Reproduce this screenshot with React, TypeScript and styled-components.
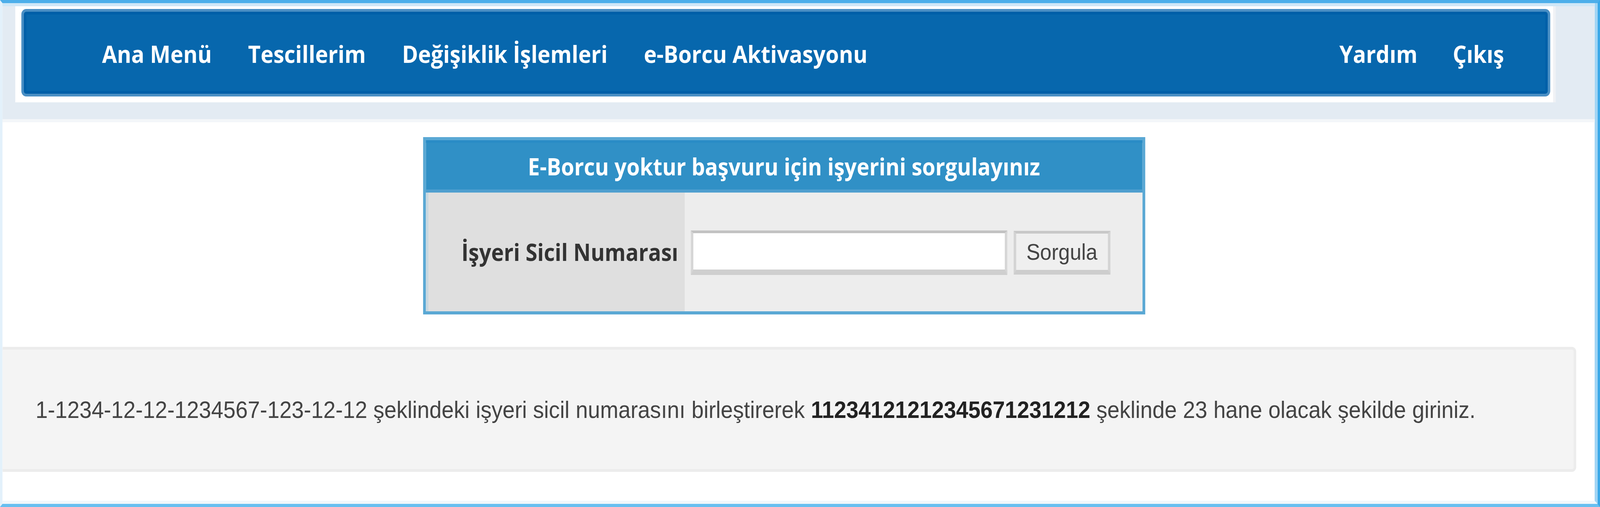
import styled, { createGlobalStyle } from 'styled-components'

const DESIGN_WIDTH = 4500

const GlobalStyle = createGlobalStyle`
  html, body {
    margin: 0;
    padding: 0;
    background: #ffffff;
    overflow: hidden;
  }
  * {
    box-sizing: border-box;
  }
`

const Frame = styled.div`
  width: ${DESIGN_WIDTH}px;
  height: 100vh;
  display: flex;
  flex-direction: column;
  border-top: 8px solid #4caeea;
  border-right: 7px solid #3aa8e8;
  border-bottom: 8px solid #68bff0;
  border-left: 7px solid #e3f1fb;
  background: #ffffff;
  transform-origin: 0 0;
`

const Inner = styled.div`
  flex: 1;
  display: flex;
  flex-direction: column;
  border-right: 8px solid #a0d4f4;
  border-bottom: 8px solid #f1f7fb;
`

const HeaderWrap = styled.header`
  background: #e3ebf3;
  border-top: 8px solid #cfe7f7;
  border-bottom: 8px solid #f3f6f9;
  padding: 0 110px 43px 36px;
`

const HeaderCard = styled.div`
  background: #ffffff;
  padding: 7px 8px 15px 17px;
  border-right: 7px solid #f0f2f5;
`

const NavBar = styled.nav`
  height: 224px;
  display: flex;
  align-items: center;
  justify-content: space-between;
  padding: 4px 123px 0 220px;
  background: #0767ad;
  border: 7px solid #4a8fc4;
  box-shadow: inset 0 0 0 7px #005fa8;
  border-radius: 14px;
`

const NavGroup = styled.ul<{ gap: number }>`
  list-style: none;
  margin: 0;
  padding: 0;
  display: flex;
  gap: ${({ gap }) => gap}px;
`

const NavItem = styled.li`
  font-family: 'Open Sans', 'Noto Sans', sans-serif;
  font-weight: 700;
  font-size: 61px;
  color: #ffffff;
  white-space: nowrap;
`

const Main = styled.main`
  display: flex;
  justify-content: center;
  padding: 38px 135px 0 53px;
`

const Panel = styled.section`
  width: 2031px;
  height: 454px;
  display: flex;
  flex-direction: column;
  border: 8px solid #5aa8d4;
`

const PanelHeader = styled.div`
  height: 134px;
  display: flex;
  align-items: center;
  justify-content: center;
  background: #3090c6;
  border-top: 7px solid #2a8cc6;
  border-bottom: 8px solid #4f9fcf;
  font-family: 'Open Sans', 'Noto Sans', sans-serif;
  font-weight: 700;
  font-size: 60px;
  color: #ffffff;
`

const PanelBody = styled.div`
  flex: 1;
  display: grid;
  grid-template-columns: 728px 1fr;
`

const LabelCell = styled.div`
  display: flex;
  align-items: center;
  justify-content: flex-end;
  padding-right: 18px;
  background: #dfdfdf;
  border-left: 7px solid #c8d8e0;
  font-family: 'Open Sans', 'Noto Sans', sans-serif;
  font-weight: 700;
  font-size: 60px;
  color: #333333;
  white-space: nowrap;
`

const InputCell = styled.div`
  display: flex;
  align-items: center;
  gap: 18px;
  padding: 4px 0 0 17px;
  background: #ededed;
`

const TextInput = styled.input`
  width: 890px;
  height: 114px;
  background: #ffffff;
  border: 7px solid #d6d6d6;
  border-top-color: #c2c2c2;
  border-bottom: 14px solid #cfcfcf;
  outline: none;
`

const Button = styled.button`
  width: 272px;
  height: 112px;
  padding: 0;
  background: #efefef;
  border: 7px solid #d4d4d4;
  border-top-color: #c8c8c8;
  border-bottom: 12px solid #cdcdcd;
  font-family: 'Liberation Sans', Arial, sans-serif;
  font-size: 58px;
  color: #444444;
`

const InfoBox = styled.div`
  height: 320px;
  margin: 83px 52px 0 0;
  display: flex;
  align-items: center;
  padding-left: 93px;
  background: #f4f4f4;
  border: 7px solid #ececec;
  border-left: none;
  border-radius: 0 12px 12px 0;
  font-family: 'Liberation Sans', Arial, sans-serif;
  font-size: 61.7px;
  color: #444444;
  white-space: nowrap;

  b {
    color: #222222;
  }
`

const leftLinks = ['Ana Menü', 'Tescillerim', 'Değişiklik İşlemleri', 'e-Borcu Aktivasyonu']
const rightLinks = ['Yardım', 'Çıkış']

export default function App() {
  // the page is drawn for a 4500px wide window; squeeze it to the real one
  const scale = typeof window !== 'undefined' ? window.innerWidth / DESIGN_WIDTH : 1
  return (
    <>
      <GlobalStyle />
      <Frame style={{ transform: `scaleX(${scale})` }}>
        <Inner>
          <HeaderWrap>
            <HeaderCard>
              <NavBar>
                <NavGroup gap={102}>
                  {leftLinks.map((l) => (
                    <NavItem key={l}>{l}</NavItem>
                  ))}
                </NavGroup>
                <NavGroup gap={99}>
                  {rightLinks.map((l) => (
                    <NavItem key={l}>{l}</NavItem>
                  ))}
                </NavGroup>
              </NavBar>
            </HeaderCard>
          </HeaderWrap>
          <Main>
            <Panel>
              <PanelHeader>E-Borcu yoktur başvuru için işyerini sorgulayınız</PanelHeader>
              <PanelBody>
                <LabelCell>İşyeri Sicil Numarası</LabelCell>
                <InputCell>
                  <TextInput type="text" />
                  <Button>Sorgula</Button>
                </InputCell>
              </PanelBody>
            </Panel>
          </Main>
          <InfoBox>
            <span>
              1-1234-12-12-1234567-123-12-12 şeklindeki işyeri sicil numarasını birleştirerek{' '}
              <b>11234121212345671231212</b> şeklinde 23 hane olacak şekilde giriniz.
            </span>
          </InfoBox>
        </Inner>
      </Frame>
    </>
  )
}
